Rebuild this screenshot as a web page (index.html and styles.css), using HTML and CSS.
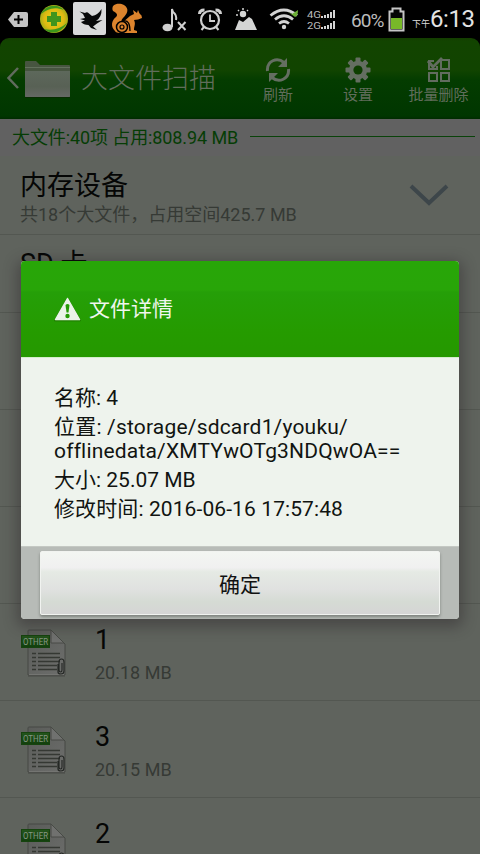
FILE: index.html
```html
<!DOCTYPE html>
<html lang="zh-CN">
<head>
<meta charset="utf-8">
<title>大文件扫描</title>
<link rel="stylesheet" href="styles.css">
</head>
<body>
<svg class="defs" width="0" height="0" aria-hidden="true">
  <defs>
    <linearGradient id="paper" x1="0" y1="0" x2="1" y2="1"><stop offset="0" stop-color="#5a5c59"/><stop offset="1" stop-color="#6d6e6c"/></linearGradient>
    <linearGradient id="tag" x1="0" y1="0" x2="0" y2="1"><stop offset="0" stop-color="#24551c"/><stop offset="1" stop-color="#113f0c"/></linearGradient>
    <linearGradient id="folder" x1="0" y1="0" x2="0" y2="1"><stop offset="0" stop-color="#5d685b"/><stop offset=".6" stop-color="#586155"/><stop offset="1" stop-color="#656964"/></linearGradient>
    <radialGradient id="ball"><stop offset="0" stop-color="#e6d51c"/><stop offset=".7" stop-color="#dfba12"/><stop offset="1" stop-color="#a5ae18"/></radialGradient>
    <symbol id="other" viewBox="0 0 46 48">
      <path d="M8 1h22l14 14v31H7V2q0-1 1-1z" fill="url(#paper)" stroke="#464945"/>
      <path d="M8 45.500h35" stroke="#747572"/>
      <path d="M7 47h37" stroke="#484b46"/>
      <path d="M30 1v13h13z" fill="#70716f" stroke="#484b46"/>
      <path d="M11 24.500h4M17 24.500h22M11 28.500h4M17 28.500h22M11 32.500h4M17 32.500h22M11 36.500h4M17 36.500h19M11 40.500h4M17 40.500h19" stroke="#353833" stroke-width="1.300"/>
      <path d="M41 34v7q0 2-1.500 2T38 41v-8q0-3 2.500-3t2.500 3v9q0 3-3 3t-3-2v-8" fill="none" stroke="#252825" stroke-width="1.200"/>
      <rect x=".5" y="6.500" width="28" height="12" fill="url(#tag)" stroke="#16430f"/>
      <text x="2" y="16" textLength="25" lengthAdjust="spacingAndGlyphs" class="tag-text">OTHER</text>
    </symbol>
  </defs>
</svg>
<div class="screen">
  <div class="status">
    <svg class="status-icons" width="350" height="38" viewBox="0 0 350 38">
      <path d="M14 12h12q2 0 2 2v11q0 2-2 2H14l-6-7.500z" fill="#c4c4c4"/><path d="M18.500 15v9M14 19.500h9" stroke="#000" stroke-width="2"/>
      <circle cx="54" cy="19" r="14" fill="url(#ball)"/>
      <path d="M41 14C44 6 57 2 64 10C54 6 47 9 41 14zM67 23C62 32 52 36 44 29C53 31 60 29 67 23z" fill="#3d961c"/>
      <path d="M51 12h6v4h4v6h-4v4h-6v-4h-4v-6h4z" fill="#41951d"/>
      <rect x="73" y="2" width="33" height="33" rx="2" fill="#d8d9da"/>
      <path d="M79.500 11.500L85 13q2-1.500 4 .5l3 2.500q6-1 9.500-7 .5 8-5.500 12l6.500-1-5.500 3.500-4 3 4 3.500-6-2-2.500-3q-5 0-7.500-3l4-1.500-5-1.500 5-1-2-4z" fill="#08090a"/>
      <path d="M115 31c-5-5-3-11 1-14c2-2 1-4-3-6c-3-7 6-9 11-6c6 4 3 9-1 13c-2 2-2 4-1 5l8-7l4-2l-1-4l4 3l1-3c1 2 1 3 2 4q2 1 2 4q-4 2-8 2c2 4 0 6 0 10l3 1v2h-16q-5 0-6-2z" fill="#dd842d"/>
      <circle cx="122" cy="27" r="5.500" fill="#dd842d" stroke="#000" stroke-width="1.500"/><circle cx="122" cy="27" r="2" fill="none" stroke="#000" stroke-width="1.200"/>
      <path d="M124 21q6-1 6 10" fill="none" stroke="#000" stroke-width="1.300"/>
      <g fill="none" stroke="#d0d0d0">
        <path d="M172 27V9l1 3q4 3 3 8" stroke-width="2"/><ellipse cx="167.500" cy="27.500" rx="5" ry="3.800" fill="#d0d0d0" stroke="none"/>
        <path d="M178 22l7.500 8M185.500 22l-7.500 8" stroke-width="2"/>
        <circle cx="210" cy="20" r="9" stroke-width="2.200"/><path d="M210 14.500V21h5" stroke-width="1.800"/>
        <path d="M199.500 14q0-4 5-4M220.500 14q0-4-5-4" stroke-width="3"/><path d="M204 27l-2.500 3M216 27l2.500 3" stroke-width="2"/>
      </g>
      <path d="M235 30l4-10 4 2 6-5 3 2 5 11z" fill="#d4d5d4"/><circle cx="243" cy="14" r="3.200" fill="#d4d5d4"/><path d="M236 15h2M238 10l1 1M243 8v2M248 10l-1 1" stroke="#d4d5d4" stroke-width="1.500"/>
      <g fill="none" stroke="#d3d3d3" stroke-width="2.800"><path d="M270.500 15.500Q284 4.500 297 15.500M275 19.500Q284 12 293 19.500M279 23.500Q284 19.500 289 23.500"/></g>
      <circle cx="284" cy="27" r="2.200" fill="#d3d3d3"/><path d="M288 12l4 2 6-4q0 6-3 7z" fill="#6bad35"/>
      <text x="307" y="18" class="net" textLength="14" lengthAdjust="spacingAndGlyphs">4G</text><text x="307" y="28.500" class="net" textLength="14" lengthAdjust="spacingAndGlyphs">2G</text>
      <path d="M322 18v-2M325 18v-3M328 18v-4M331 18v-6M334 18v-8M322 29v-2M325 29v-3M328 29v-4M331 29v-6M334 29v-8" stroke="#d4d4d4" stroke-width="2"/>
    </svg>
    <span class="percent">60%</span>
    <svg class="battery" width="17" height="25" viewBox="0 0 17 25"><path d="M1.500 4.500h3v-3h8v3h3v19h-14z" fill="#050505" stroke="#c6c6c6" stroke-width="2"/><path d="M3 11h11v11H3z" fill="#78b928"/></svg>
    <span class="noon">下午</span><span class="clock">6:13</span>
  </div>
  <header class="bar">
    <svg class="back" width="14" height="24" viewBox="0 0 14 24"><path d="M12 2L2.500 12 12 22" fill="none" stroke="#616b5e" stroke-width="2.500"/></svg>
    <svg class="folder" width="47" height="40" viewBox="0 0 47 40"><path d="M1 2q0-1 1-1h10l4 4h29q1 0 1 1v31H1z" fill="#475540"/><path d="M1 11h45v25q0 1-1 1H2q-1 0-1-1z" fill="url(#folder)"/><path d="M1 7.500h45" stroke="#62705c"/><path d="M1 37.500h45" stroke="#082c02" stroke-width="1"/></svg>
    <h1>大文件扫描</h1>
    <nav>
      <div class="tool"><svg width="26" height="26" viewBox="0 0 26 26"><g fill="none" stroke="#646e61" stroke-width="3"><path d="M2.500 14C1.500 4 12 -.5 19 5.500M23.500 12C24.500 22 14 26.500 7 20.500"/></g><path d="M22 1v9h-9zM4 25v-9h9z" fill="#646e61"/></svg><span>刷新</span></div>
      <div class="tool"><svg width="26" height="26" viewBox="-13 -13 26 26"><g fill="#646e61"><g id="teeth"><rect x="-2.500" y="-12.500" width="5" height="25" rx="1"/><rect x="-12.500" y="-2.500" width="25" height="5" rx="1"/></g><use href="#teeth" transform="rotate(45)"/><circle r="9.200"/></g><circle r="4.600" fill="#0d3e00"/></svg><span>设置</span></div>
      <div class="tool"><svg width="26" height="26" viewBox="0 0 26 26"><g fill="none" stroke="#626c5f" stroke-width="2"><path d="M8 4H3v8h8V9M15 3h8v9h-8zM3 16h8v8H3zM15 16h8v8h-8z"/><path d="M2 4l5 6 9-9" stroke-width="2.800"/></g></svg><span>批量删除</span></div>
    </nav>
  </header>
  <div class="summary"><span>大文件:40项 占用:808.94 MB</span><i></i></div>
  <main>
    <section class="group first"><div><h2>内存设备</h2><p>共18个大文件，占用空间425.7 MB</p></div><svg width="40" height="24" viewBox="0 0 40 24"><path d="M2 2l18 17L38 2" fill="none" stroke="#3d464a" stroke-width="4"/></svg></section>
    <section class="group second"><div><h2>SD 卡</h2></div></section>
    <div class="row"></div><div class="row"></div><div class="row"></div>
    <div class="row"><svg class="file" width="46" height="48"><use href="#other"/></svg><div><h2>1</h2><p>20.18 MB</p></div></div>
    <div class="row"><svg class="file" width="46" height="48"><use href="#other"/></svg><div><h2>3</h2><p>20.15 MB</p></div></div>
    <div class="row"><svg class="file" width="46" height="48"><use href="#other"/></svg><div><h2>2</h2></div></div>
  </main>
  <div class="dialog">
    <div class="dialog-head"><svg width="27" height="25" viewBox="0 0 27 25"><path d="M13.500 2L26 23.500H1z" fill="#208000" stroke="#208000" stroke-width="2" stroke-linejoin="round"/><path d="M13.500 1.500L25.500 22.500H1.500z" fill="#ebf3e9" stroke="#ebf3e9" stroke-width="1.500" stroke-linejoin="round"/><path d="M11.500 8q2-2 4 0l-1 7.500h-2z" fill="#259a05"/><circle cx="13.500" cy="19" r="2.200" fill="#259a05"/></svg><span>文件详情</span></div>
    <div class="dialog-body"><div>名称: 4</div><div class="place">位置: /storage/sdcard1/youku/</div><div class="path">offlinedata/XMTYwOTg3NDQwOA==</div><div>大小: 25.07 MB</div><div class="time">修改时间: 2016-06-16 17:57:48</div></div>
    <div class="dialog-foot"><button>确定</button></div>
  </div>
</div>
</body>
</html>
```
FILE: styles.css
```css
* { box-sizing: border-box; }
body { margin: 0; background: #000; font-family: Roboto, "Noto Sans CJK SC", sans-serif; }
h1, h2, p { margin: 0; font-weight: 400; }
svg { display: block; flex: none; }
.defs { position: absolute; }
.screen { position: relative; width: 480px; height: 854px; overflow: hidden; display: flex; flex-direction: column; }
.status { height: 38px; flex: none; display: flex; align-items: flex-start; color: #ddd; white-space: nowrap; }
.net { font-size: 9.5px; fill: #bbb; }
.percent { width: 37px; margin-left: 1px; font-size: 19px; line-height: 41px; letter-spacing: -.9px; color: #bcbcbc; }
.battery { margin-top: 7px; }
.noon { width: 18px; margin-left: 7px; font-size: 9px; line-height: 48px; }
.clock { font-size: 24px; line-height: 38px; letter-spacing: -.4px; color: #e4e4e4; }
.bar { height: 81px; flex: none; display: flex; border-radius: 9px 9px 0 0; background: linear-gradient(#143c00 0, #124400 3px, #114400 32px, #043c00 42px, #003600 78px, #002b00); color: #616d5c; }
.back { margin: 28px 0 0 6px; }
.folder { margin: 22px 0 0 4px; }
.bar h1 { margin-left: 10px; width: 150px; font-size: 27px; line-height: 82px; font-weight: 300; }
.bar nav { display: flex; margin-left: 7px; }
.tool { width: 80px; display: flex; flex-direction: column; align-items: center; padding-top: 19px; font-size: 15px; }
.tool:last-child { padding-left: 1px; }
.tool span { line-height: 22px; margin-top: 1px; white-space: nowrap; }
.summary { height: 37px; flex: none; display: flex; align-items: flex-start; padding: 0 5px 0 12px; background: #616161; color: #063d05; font-size: 18px; line-height: 38px; }
.summary span { width: 238px; letter-spacing: -.1px; white-space: nowrap; }
.summary i { flex: 1; height: 1px; margin-top: 17px; background: #0a430a; }
main { flex: 1; background: #5f635d; }
.group { display: flex; justify-content: space-between; padding: 0 31px 0 20px; border-bottom: 1px solid #535751; }
h2 { font-size: 27px; line-height: 34px; color: #050605; }
main p { font-size: 18px; line-height: 24px; color: #363a35; white-space: nowrap; }
.first { height: 79px; padding-top: 13px; }
.first svg { margin-top: 15px; }
.second { height: 78px; padding-top: 12px; }
.row { height: 97px; display: flex; padding: 19px 21px 0; border-bottom: 1px solid #535751; }
.row > div { margin-left: 28px; }
.row p { margin-top: 4px; }
.file { margin-top: 6px; }
.tag-text { font-size: 9.5px; fill: #879684; }
.dialog { position: absolute; left: 21px; top: 261px; width: 438px; height: 358px; border-radius: 4px; overflow: hidden; background: #eef3ed; box-shadow: 0 4px 14px 4px rgba(40,32,38,.4); }
.dialog-head { height: 96px; display: flex; padding-left: 33px; background: linear-gradient(#28a608 0, #28a508 29px, #259f08 31px, #259b00 70px, #259800); color: #f0f6ee; font-size: 21px; line-height: 97px; }
.dialog-head svg { margin-top: 36px; }
.dialog-head span { margin-left: 8px; }
.dialog-body { height: 189px; padding: 26px 0 0 33px; color: #111411; font-size: 21px; line-height: 29px; white-space: nowrap; border-top: 1px solid #d4edcc; font-variant-ligatures: none; }
.dialog-body .place { letter-spacing: .19px; }
.dialog-body .path { height: 24px; line-height: 19px; letter-spacing: .18px; }
.dialog-body .time { letter-spacing: .1px; }
.dialog-foot { height: 73px; padding: 4px 19px 0; background: #b7bbb7; border-top: 1px solid #c4c8c3; }
.dialog-foot button { display: block; width: 400px; height: 64px; padding: 0 0 1px; border: 1px solid #f1f3f0; border-radius: 2px; background: linear-gradient(#f3f6f2, #f0f0f0 25%, #e5eae4 32%, #e0e1e0 60%, #d5dbd4 80%, #d5d5d5); box-shadow: 0 2px 3px rgba(70,75,70,.5); font: inherit; font-size: 21px; color: #111; }
```
